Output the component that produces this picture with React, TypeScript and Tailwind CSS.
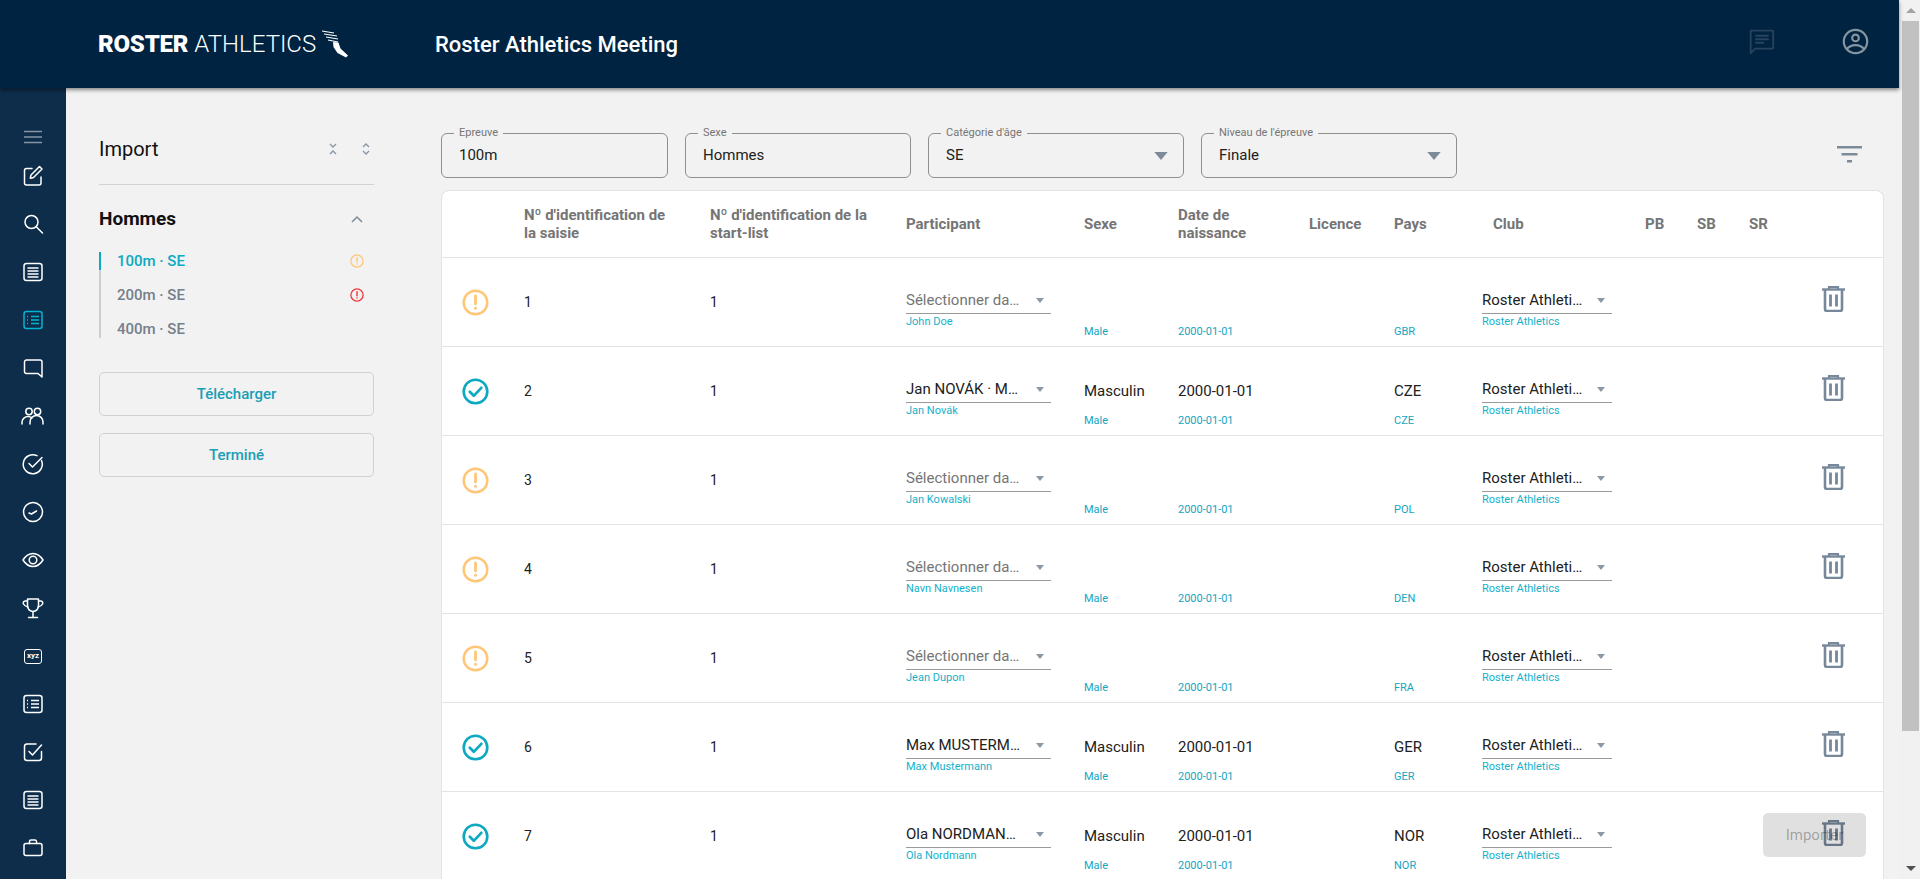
import React from 'react'

const Ic = ({ children, className = 'w-6 h-6' }: { children: React.ReactNode; className?: string }) => (
    <svg viewBox="0 0 24 24" fill="none" stroke="currentColor" strokeWidth="1.5" strokeLinecap="round" strokeLinejoin="round" className={className}>
        {children}
    </svg>
)

const TextBox = () => (
    <Ic>
        <rect x="3" y="3.5" width="18" height="17" rx="2.5" />
        <path d="M6.5 8h11M6.5 11h11M6.5 14h11M6.5 17h11" strokeLinecap="butt" />
    </Ic>
)

const ListBox = () => (
    <Ic>
        <rect x="3" y="3.5" width="18" height="17" rx="2.5" />
        <path d="M10 8.5h8M10 12h8M10 15.5h8M6 8.5h1M6 12h1M6 15.5h1" strokeLinecap="butt" />
    </Ic>
)

const sideIcons: React.ReactNode[] = [
    <Ic key="edit"><path d="M11 4.5H5.5a2 2 0 0 0-2 2V19a2 2 0 0 0 2 2H18a2 2 0 0 0 2-2v-6" /><path d="M18.5 2.500l2.500 2.500-8.500 8.500-3.200.7.7-3.200z" /></Ic>,
    <Ic key="search"><circle cx="10.5" cy="10" r="6.5" /><path d="M15.5 15l6 6" /></Ic>,
    <TextBox key="t1" />,
    <span key="active" className="text-[#00b5d1]"><ListBox /></span>,
    <Ic key="chat"><path d="M5.500 4H19a2 2 0 0 1 2 2v15l-4-3.500H5.500a2 2 0 0 1-2-2V6a2 2 0 0 1 2-2z" /></Ic>,
    <Ic key="people"><circle cx="8" cy="7.500" r="3.200" /><circle cx="16.500" cy="7.500" r="3.200" /><path d="M1 20v-2a6 6 0 0 1 6-5.500c1.500 0 3 .6 4 1.500M9 20v-2a6.500 6.500 0 0 1 13 0v2" /></Ic>,
    <Ic key="circle-check"><path d="M20.500 8.500A9.500 9.500 0 1 1 16 3.700" /><path d="M8 11.500l3.500 3.500L21 5.500" /></Ic>,
    <Ic key="clock"><circle cx="12" cy="12" r="9.500" /><path d="M8 13l2.500 1 5-3" /></Ic>,
    <Ic key="eye"><path d="M2 12c2.500-4 6-6.500 10-6.500S19.500 8 22 12c-2.500 4-6 6.500-10 6.500S4.500 16 2 12z" /><circle cx="12" cy="12" r="3.800" /></Ic>,
    <Ic key="trophy"><path d="M6.500 3h11v7a5.500 5.500 0 0 1-11 0z" /><path d="M6.500 5H4a2 2 0 0 0-1.500 3c.8 1.500 2 2.500 4.500 3M17.500 5H20a2 2 0 0 1 1.500 3c-.8 1.500-2 2.500-4.500 3M12 15.500V21M7.500 21.500h9" /></Ic>,
    <span key="xyz" className="flex items-center justify-center w-6 h-6">
        <span className="w-[18px] h-[15px] border-[1.5px] border-white rounded-[3px] flex items-center justify-center text-[8px] font-bold leading-none">xyz</span>
    </span>,
    <ListBox key="l2" />,
    <Ic key="checkbox"><path d="M20.500 11.500V18a2.500 2.500 0 0 1-2.500 2.500H6A2.500 2.500 0 0 1 3.500 18V6.500A2.500 2.500 0 0 1 6 4h9" /><path d="M8 11.500l3.500 3.500L20.500 5" /></Ic>,
    <TextBox key="t2" />,
    <Ic key="case"><rect x="3" y="7.500" width="18" height="12" rx="2" /><path d="M8.500 7.500V5.500a1.500 1.500 0 0 1 1.500-1.500h4a1.500 1.500 0 0 1 1.500 1.500v2" /></Ic>,
]

const WarnIcon = ({ className, color }: { className: string; color: string }) => (
    <svg viewBox="0 0 27 27" className={`${className} ${color}`} fill="none" stroke="currentColor">
        <circle cx="13.500" cy="13.500" r="11.800" strokeWidth="2.500" />
        <path d="M13.500 7v8" strokeWidth="2.800" strokeLinecap="round" />
        <circle cx="13.500" cy="19.300" r="1.500" fill="currentColor" stroke="none" />
    </svg>
)

const OkIcon = () => (
    <svg viewBox="0 0 27 27" className="w-[27px] h-[27px] text-[#0ca9c1]" fill="none" stroke="currentColor">
        <circle cx="13.500" cy="13.500" r="11.800" strokeWidth="2.600" />
        <path d="M7.800 13.800l4 4 7.500-8" strokeWidth="2.700" strokeLinecap="round" strokeLinejoin="round" />
    </svg>
)

const TrashIcon = () => (
    <svg viewBox="0 0 23 26" className="w-[23px] h-[26px] text-[#76889a]" fill="none" stroke="currentColor">
        <path d="M0 3.500h23" strokeWidth="2.400" />
        <path d="M7 3V1h9v2" strokeWidth="2.200" />
        <path d="M3 4v19a2 2 0 0 0 2 2h13a2 2 0 0 0 2-2V4" strokeWidth="2.600" />
        <path d="M8.500 8.500v12M14.500 8.500v12" strokeWidth="2.800" />
    </svg>
)

const Caret = ({ big }: { big?: boolean }) => (
    <svg viewBox="0 0 10 6" className={big ? 'w-[14px] h-[8px] text-[#7d8b99]' : 'w-[8px] h-[5px] text-[#8b98a5]'} fill="currentColor">
        <path d="M0 0h10L5 6z" />
    </svg>
)

const Field = ({ label, value, width, select }: { label: string; value: string; width: string; select?: boolean }) => (
    <div className={`relative h-[45px] ${width} border border-[#8f8f8f] rounded-[6px] flex items-center justify-between pl-[17px] pr-[15px]`}>
        <span className="absolute -top-[7px] left-[12px] bg-[#f2f2f2] px-[5px] text-[11px] leading-3 text-[#757575] whitespace-nowrap">{label}</span>
        <span className="text-[15px] text-[#212121]">{value}</span>
        {select && <Caret big />}
    </div>
)

const gridCols = 'grid grid-cols-[82px_186px_196px_178px_94px_131px_85px_88px_163px_52px_52px_1fr]'

const Head = ({ children, className = '' }: { children?: React.ReactNode; className?: string }) => (
    <div className={`text-[15px] leading-[18px] font-bold text-[#757575] ${className}`}>{children}</div>
)

const Select = ({ value, sub, placeholder, width }: { value: string; sub: string; placeholder?: boolean; width: string }) => (
    <div className={`pt-[32px] ${width}`}>
        <div className="h-[24px] border-b border-[#9a9a9a] flex items-center justify-between pb-[3px] pr-[7px]">
            <span className={`text-[15px] leading-[20px] whitespace-nowrap ${placeholder ? 'text-[#757575]' : 'text-[#212121]'}`}>{value}</span>
            <Caret />
        </div>
        <div className="mt-[2px] text-[11px] leading-3 text-[#14b1cb] whitespace-nowrap">{sub}</div>
    </div>
)

const Info = ({ value, sub }: { value: string; sub: string }) => (
    <div className="pt-[34px]">
        <div className="h-5 text-[15px] leading-5 text-[#212121]">{value}</div>
        <div className="mt-[14px] text-[11px] leading-3 text-[#14a5bf]">{sub}</div>
    </div>
)

type RowData = {
    id: number
    ok: boolean
    player?: string
    name: string
    country: string
}

const rows: RowData[] = [
    { id: 1, ok: false, name: 'John Doe', country: 'GBR' },
    { id: 2, ok: true, player: 'Jan NOVÁK · M…', name: 'Jan Novák', country: 'CZE' },
    { id: 3, ok: false, name: 'Jan Kowalski', country: 'POL' },
    { id: 4, ok: false, name: 'Navn Navnesen', country: 'DEN' },
    { id: 5, ok: false, name: 'Jean Dupon', country: 'FRA' },
    { id: 6, ok: true, player: 'Max MUSTERM…', name: 'Max Mustermann', country: 'GER' },
    { id: 7, ok: true, player: 'Ola NORDMAN…', name: 'Ola Nordmann', country: 'NOR' },
]

const Row = ({ row }: { row: RowData }) => (
    <div className={`${gridCols} h-[89px] shrink-0 border-t border-[#e3e3e3]`}>
        <div className="pt-[31px] pl-[20px]">
            {row.ok ? <OkIcon /> : <WarnIcon className="w-[27px] h-[27px]" color="text-[#ffc678]" />}
        </div>
        <div className="pt-[34px] text-[14px] leading-5 text-[#212121]">{row.id}</div>
        <div className="pt-[34px] text-[14px] leading-5 text-[#212121]">1</div>
        <Select value={row.player || 'Sélectionner da…'} placeholder={!row.player} sub={row.name} width="w-[145px]" />
        <Info value={row.ok ? 'Masculin' : ''} sub="Male" />
        <Info value={row.ok ? '2000-01-01' : ''} sub="2000-01-01" />
        <div />
        <Info value={row.ok ? row.country : ''} sub={row.country} />
        <Select value="Roster Athleti…" sub="Roster Athletics" width="w-[130px]" />
        <div />
        <div />
        <div className="pt-[28px] pl-[73px]">
            <TrashIcon />
        </div>
    </div>
)

const App = () => {
    return (
        <div className="flex h-[879px] w-full overflow-hidden bg-[#f2f2f2] font-['Roboto',sans-serif]">
            <div className="relative flex flex-col w-[1899px] shrink-0">
                <header className="relative z-10 flex items-center h-[88px] shrink-0 bg-[#002341] shadow-[0_2px_4px_rgba(0,0,0,0.45)] pl-[98px] pr-[30px]">
                    <div className="flex items-center text-white text-[24px] leading-none w-[337px]">
                        <span className="font-black tracking-[-0.2px]">ROSTER</span>
                        <span className="font-light ml-[6px]">ATHLETICS</span>
                        <svg viewBox="0 0 28 28" className="w-7 h-7 ml-[5px] -mt-[1px]" fill="white">
                            <path d="M1 1l12 2M3 4l13 2M5 7l12 2M7 10l10 2" stroke="white" strokeWidth="1.100" />
                            <path d="M12 12l5.500.5 2 6 7.500 7-2 2-8.500-4.500-4-6z" />
                        </svg>
                    </div>
                    <div className="text-white text-[22px] font-medium">Roster Athletics Meeting</div>
                    <div className="ml-auto -mt-[5px] flex items-center gap-[67px]">
                        <svg viewBox="0 0 30 30" className="w-[27px] h-[27px] text-[#27435e]" fill="none" stroke="currentColor">
                            <path d="M3 3h24a1 1 0 0 1 1 1v18a1 1 0 0 1-1 1H8l-5 5V4a1 1 0 0 1 0-1z" strokeWidth="2" strokeLinejoin="round" />
                            <path d="M8 8.500h15M8 12.500h15M8 16.500h10" strokeWidth="2.200" />
                        </svg>
                        <svg viewBox="0 0 30 30" className="w-[27px] h-[27px] text-[#83959f]" fill="none" stroke="currentColor" strokeWidth="2.400">
                            <circle cx="15" cy="15" r="13" />
                            <circle cx="15" cy="11" r="3.700" />
                            <path d="M5.500 23.500c2-3 5.500-4.500 9.500-4.500s7.500 1.500 9.500 4.500" />
                        </svg>
                    </div>
                </header>

                <div className="flex flex-1 min-h-0">
                    <aside className="flex flex-col items-center w-[66px] shrink-0 bg-[#0d2d4a] text-white pt-[37px]">
                        <Ic className="w-6 h-6 opacity-50 mb-[15px]"><path d="M3 6.500h18M3 12h18M3 17.500h18" strokeLinecap="butt" /></Ic>
                        <div className="flex flex-col items-center gap-6">
                            {sideIcons}
                        </div>
                    </aside>

                    <main className="relative flex flex-1 min-w-0 pt-[45px] pl-[33px]">
                        <section className="w-[275px] shrink-0">
                            <div className="flex items-center justify-between h-[32px]">
                                <h1 className="text-[20px] text-[#111]">Import</h1>
                                <div className="flex items-center gap-[25px] pr-[4px] text-[#8795a3]">
                                    <svg viewBox="0 0 8 12" className="w-2 h-3" fill="none" stroke="currentColor" strokeWidth="1.300">
                                        <path d="M1 1l3 3 3-3M1 11l3-3 3 3" />
                                    </svg>
                                    <svg viewBox="0 0 8 12" className="w-2 h-3" fill="none" stroke="currentColor" strokeWidth="1.300">
                                        <path d="M1 4l3-3 3 3M1 8l3 3 3-3" />
                                    </svg>
                                </div>
                            </div>
                            <div className="border-b border-[#d2d2d2] mt-[19px]" />
                            <div className="flex items-center justify-between mt-[22px] h-[24px] pr-[11px]">
                                <span className="text-[19px] font-bold text-[#111]">Hommes</span>
                                <svg viewBox="0 0 12 8" className="w-3 h-2 text-[#7d8b99]" fill="none" stroke="currentColor" strokeWidth="1.500">
                                    <path d="M1 7l5-5 5 5" />
                                </svg>
                            </div>
                            <ul className="mt-[21px] border-l-2 border-[#c9ced3] relative text-[15px] font-medium">
                                <span className="absolute -left-[2px] top-0 h-[18px] w-[2px] bg-[#0ca9c1]" />
                                <li className="flex items-center justify-between h-[18px] pl-[16px] pr-[10px] text-[#0ca9c1]">
                                    100m · SE
                                    <WarnIcon className="w-[14px] h-[14px]" color="text-[#ffc678]" />
                                </li>
                                <li className="flex items-center justify-between h-[18px] mt-[16px] pl-[16px] pr-[10px] text-[#757f89]">
                                    200m · SE
                                    <WarnIcon className="w-[14px] h-[14px]" color="text-[#f0383b]" />
                                </li>
                                <li className="flex items-center h-[18px] mt-[16px] mb-[1px] pl-[16px] text-[#757f89]">
                                    400m · SE
                                </li>
                            </ul>
                            <button className="mt-[33px] w-full h-[44px] border border-[#d0d0d0] rounded-[5px] text-[15px] font-medium text-[#1b9eb5]">
                                Télécharger
                            </button>
                            <button className="mt-[17px] w-full h-[44px] border border-[#d0d0d0] rounded-[5px] text-[15px] font-medium text-[#1b9eb5]">
                                Terminé
                            </button>
                        </section>

                        <section className="ml-[67px] w-[1443px] shrink-0 flex flex-col min-h-0">
                            <div className="flex items-center shrink-0">
                                <Field label="Epreuve" value="100m" width="w-[227px]" />
                                <Field label="Sexe" value="Hommes" width="w-[226px] ml-[17px]" />
                                <Field label="Catégorie d'âge" value="SE" width="w-[256px] ml-[17px]" select />
                                <Field label="Niveau de l'épreuve" value="Finale" width="w-[256px] ml-[17px]" select />
                                <svg viewBox="0 0 25 17" className="w-[25px] h-[17px] ml-auto mr-[22px] -mt-[2px] text-[#7d8b99]" fill="currentColor">
                                    <path d="M0 0h25v2.500H0zM4.500 7h16v2.500h-16zM10 14h5v2.500h-5z" />
                                </svg>
                            </div>
                            <div className="mt-[12px] flex-1 min-h-0 overflow-hidden bg-white border border-[#e3e3e3] border-b-0 rounded-t-lg flex flex-col">
                                <div className={`${gridCols} items-center h-[66px] shrink-0`}>
                                    <Head />
                                    <Head className="w-[150px]">Nº d'identification de la saisie</Head>
                                    <Head className="w-[170px]">Nº d'identification de la start-list</Head>
                                    <Head>Participant</Head>
                                    <Head>Sexe</Head>
                                    <Head className="w-[80px]">Date de naissance</Head>
                                    <Head>Licence</Head>
                                    <Head>Pays</Head>
                                    <Head className="pl-[11px]">Club</Head>
                                    <Head>PB</Head>
                                    <Head>SB</Head>
                                    <Head>SR</Head>
                                </div>
                                {rows.map((row) => (
                                    <Row key={row.id} row={row} />
                                ))}
                            </div>
                        </section>

                        <button className="absolute right-[33px] bottom-[22px] w-[103px] h-[44px] rounded-[5px] bg-black/12 text-black/30 text-[15px]">
                            Importer
                        </button>
                    </main>
                </div>
            </div>

            {/* fake windows scrollbar */}
            <div className="flex flex-col items-center w-[21px] shrink-0 bg-[#f1f1f1] pl-[2px]">
                <div className="flex items-center justify-center h-[21px] shrink-0">
                    <div className="w-0 h-0 border-x-[5px] border-x-transparent border-b-[5px] border-b-[#a3a3a3]" />
                </div>
                <div className="w-[17px] h-[710px] shrink-0 bg-[#c1c1c1]" />
                <div className="mt-auto flex items-center justify-center h-[21px]">
                    <div className="w-0 h-0 border-x-[5px] border-x-transparent border-t-[5px] border-t-[#505050]" />
                </div>
            </div>
        </div>
    )
}

export default App
